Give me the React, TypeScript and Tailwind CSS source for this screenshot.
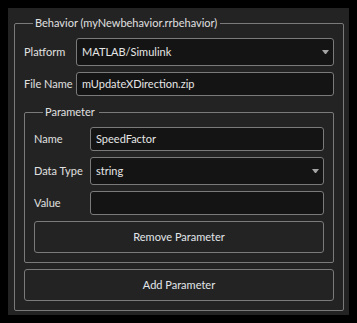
import React from "react";

function Arrow() {
  return (
    <svg width="7" height="4" viewBox="0 0 7 4" className="shrink-0">
      <path d="M0 0 H7 L4 4 H3 Z" fill="#a4a4a4" />
    </svg>
  );
}

function Combo({ value }: { value: string }) {
  return (
    <div className="h-[28px] flex items-center justify-between rounded-[3px] border border-[#7a7a7a] bg-[#141414] pl-[5px] pr-[4px]">
      <span className="text-[#e6e6e6]">{value}</span>
      <Arrow />
    </div>
  );
}

function Input({ value }: { value: string }) {
  return (
    <div className="h-[24px] flex items-center rounded-[3px] border border-[#7a7a7a] bg-[#141414] px-[5px]">
      <span className="text-[#e6e6e6]">{value}</span>
    </div>
  );
}

function Button({ label }: { label: string }) {
  return (
    <div className="h-[32px] flex items-center justify-center rounded-[3px] border border-[#7a7a7a] bg-[#232323] text-[#e2e6ea]">
      {label}
    </div>
  );
}

export default function App() {
  return (
    <div className="w-[357px] h-[323px] bg-black p-2 font-[Lato,sans-serif] text-[11px] leading-[16px] text-[#e0e0e0]">
      <div className="w-full h-full bg-[#232323] pt-[15px] pl-[6px] pr-[5px]">
        <div className="relative h-[288px] rounded-[2px] border border-[#7a7a7a] pt-[14px] pl-[9px] pr-[9px] pb-[9px] flex flex-col">
          <span className="absolute -top-[9px] left-[18px] bg-[#232323] pl-[2px] pr-[3px] whitespace-nowrap">
            Behavior (myNewbehavior.rrbehavior)
          </span>
          <div className="grid grid-cols-[52px_1fr] items-center">
            <span>Platform</span>
            <Combo value="MATLAB/Simulink" />
          </div>
          <div className="grid grid-cols-[52px_1fr] items-center mt-[6px]">
            <span>File Name</span>
            <Input value="mUpdateXDirection.zip" />
          </div>
          <div className="relative mt-[16px] h-[151px] rounded-[2px] border border-[#7a7a7a] pt-[14px] pl-[9px] pr-[9px] pb-[9px] flex flex-col">
            <span className="absolute -top-[9px] left-[18px] bg-[#232323] pl-[2px] pr-[4px] whitespace-nowrap">
              Parameter
            </span>
            <div className="grid grid-cols-[56px_1fr] items-center">
              <span>Name</span>
              <Input value="SpeedFactor" />
            </div>
            <div className="grid grid-cols-[56px_1fr] items-center mt-[6px]">
              <span>Data Type</span>
              <Combo value="string" />
            </div>
            <div className="grid grid-cols-[56px_1fr] items-center mt-[6px]">
              <span>Value</span>
              <Input value="" />
            </div>
            <div className="mt-[6px]">
              <Button label="Remove Parameter" />
            </div>
          </div>
          <div className="mt-[6px]">
            <Button label="Add Parameter" />
          </div>
        </div>
      </div>
    </div>
  );
}
